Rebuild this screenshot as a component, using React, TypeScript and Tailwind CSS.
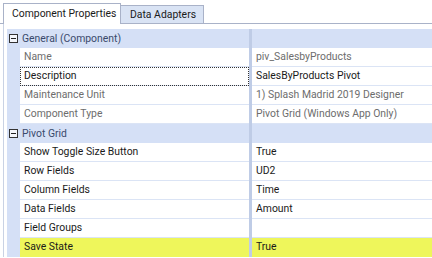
import React from 'react';

type Row =
  | { kind: 'header'; label: string }
  | { kind: 'prop'; label: string; value: string; dim?: boolean; focus?: boolean; hl?: boolean };

const rows: Row[] = [
  { kind: 'header', label: 'General (Component)' },
  { kind: 'prop', label: 'Name', value: 'piv_SalesbyProducts', dim: true },
  { kind: 'prop', label: 'Description', value: 'SalesByProducts Pivot', focus: true },
  { kind: 'prop', label: 'Maintenance Unit', value: '1) Splash Madrid 2019 Designer', dim: true },
  { kind: 'prop', label: 'Component Type', value: 'Pivot Grid (Windows App Only)', dim: true },
  { kind: 'header', label: 'Pivot Grid' },
  { kind: 'prop', label: 'Show Toggle Size Button', value: 'True' },
  { kind: 'prop', label: 'Row Fields', value: 'UD2' },
  { kind: 'prop', label: 'Column Fields', value: 'Time' },
  { kind: 'prop', label: 'Data Fields', value: 'Amount' },
  { kind: 'prop', label: 'Field Groups', value: '' },
  { kind: 'prop', label: 'Save State', value: 'True', hl: true },
];

function MinusBox() {
  return (
    <div className="w-[9px] h-[9px] border border-[#333] bg-[#f4f6fb] flex items-center justify-center">
      <div className="w-[5px] h-px bg-[#222]" />
    </div>
  );
}

export default function App() {
  return (
    <div
      className="w-[432px] h-[258px] bg-white overflow-hidden text-[10.4px] text-[#1a1a1a] whitespace-nowrap"
      style={{ fontFamily: "Roboto, 'Noto Sans', sans-serif" }}
    >
      {/* Tabs */}
      <div className="flex items-end h-[24px] pl-[3px] border-b border-[#a9b2c8]">
        <div className="w-[118px] h-[21px] pl-[8px] flex items-center bg-white border border-b-0 border-[#a9b2c8] relative top-px text-[10.4px]">
          Component Properties
        </div>
        <div className="w-[83px] h-[18px] pl-[9px] flex items-center bg-[#d9e3f4] border border-l-0 border-b-0 border-[#a9b2c8] text-[10.4px]">
          Data Adapters
        </div>
      </div>

      {/* Property grid */}
      <div className="ml-[3px] border-l border-[#c9d2e4] pl-[3px] pt-[5px]">
        {rows.map((r, i) =>
          r.kind === 'header' ? (
            <div key={i} className="flex h-[19px] bg-[#d5e0f6]">
              <div className="w-[13px] flex items-center justify-center">
                <MinusBox />
              </div>
              <div className="w-[229px] pl-[2px] flex items-center text-[#3a4a6c]">{r.label}</div>
              <div className="w-[3px] bg-[#bfcce6]" />
              <div className="flex-1" />
            </div>
          ) : (
            <div key={i} className="flex h-[19px]">
              <div className="w-[13px] bg-[#d5e0f6]" />
              <div
                className={`w-[229px] pl-[4px] flex items-center border-b ${
                  r.hl ? 'bg-[#eef65b] border-[#eef65b]' : 'border-[#dbe4f5]'
                } ${r.dim ? 'text-[#6d6d6d]' : ''} ${
                  r.focus ? 'outline outline-1 outline-dotted outline-[#333] -outline-offset-1' : ''
                }`}
              >
                {r.label}
              </div>
              <div className="w-[3px] bg-[#bfcce6]" />
              <div
                className={`flex-1 pl-[4px] flex items-center border-b ${
                  r.hl ? 'bg-[#eef65b] border-[#eef65b]' : 'border-[#dbe4f5]'
                } ${r.dim ? 'text-[#6d6d6d]' : ''}`}
              >
                {r.value}
              </div>
            </div>
          )
        )}
      </div>
    </div>
  );
}
